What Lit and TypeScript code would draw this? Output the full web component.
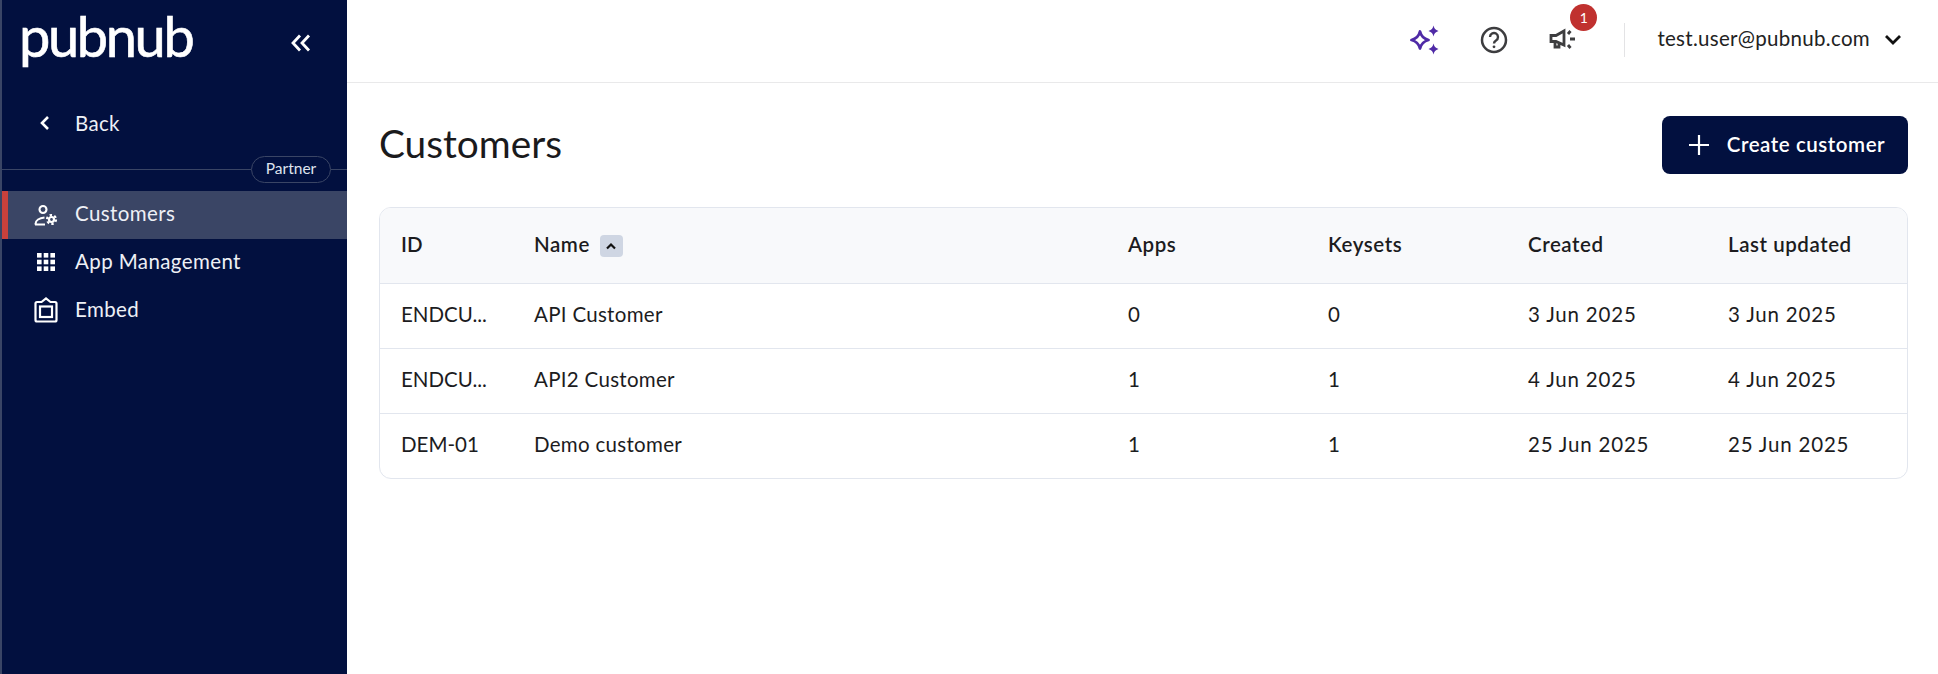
import { LitElement, html, css } from "lit";
import { customElement } from "lit/decorators.js";

const rows = [
  ["ENDCU...", "API Customer", "0", "0", "3 Jun 2025", "3 Jun 2025"],
  ["ENDCU...", "API2 Customer", "1", "1", "4 Jun 2025", "4 Jun 2025"],
  ["DEM-01", "Demo customer", "1", "1", "25 Jun 2025", "25 Jun 2025"],
];

@customElement("app-root")
export class AppRoot extends LitElement {
  static styles = css`
    :host { display: flex; height: 674px; width: 1938px; overflow: hidden; background: #fff; font-family: "Lato", "Liberation Sans", sans-serif; color: #1c1c1e; font-size: 20.5px; letter-spacing: 0.3px; }
    svg { display: block; flex: none; }
    .side { width: 347px; flex: none; background: #02103f; border-left: 2px solid #3a4565; box-sizing: border-box; color: #eef0f6; display: flex; flex-direction: column; }
    .logo-row { height: 82px; display: flex; align-items: center; justify-content: space-between; padding: 0 36px 0 17px; }
    .logo { font-size: 56px; font-weight: 400; color: #fff; letter-spacing: -2.4px; line-height: 82px; margin-top: -10px; -webkit-text-stroke: 0.6px #fff; }
    .collapse { margin-top: 3px; }
    .back { height: 82px; display: flex; align-items: center; gap: 24px; padding: 0 0 0 37px; box-sizing: border-box; }
    .txt { padding-bottom: 1px; }
    .divider { display: flex; align-items: center; margin-bottom: 8px; margin-top: -8px; }
    .line { height: 1px; background: #3a4565; flex: 1; }
    .line.end { flex: none; width: 16px; }
    .pill { border: 1px solid #3a4565; border-radius: 14px; height: 27px; width: 80px; box-sizing: border-box; display: flex; align-items: center; justify-content: center; font-size: 15.5px; letter-spacing: 0; color: #dfe3ee; padding-bottom: 3px; }
    .item { height: 48px; display: flex; align-items: center; border-left: 6px solid transparent; padding-left: 26px; gap: 17px; letter-spacing: 0.4px; }
    .item .txt { padding-bottom: 5px; }
    .item.active { background: #3a4565; border-left-color: #c8413c; }
    .ic { width: 24px; display: flex; justify-content: center; }
    .ic.up { padding-bottom: 3px; }
    main { flex: 1; display: flex; flex-direction: column; min-width: 0; }
    header { height: 83px; box-sizing: border-box; border-bottom: 1px solid #e9e9ea; display: flex; align-items: center; padding: 0 36px 2px 0; justify-content: flex-end; flex: none; }
    .hicon { width: 69px; display: flex; justify-content: center; position: relative; }
    .badge { position: absolute; top: -23px; left: 42px; width: 27px; height: 27px; border-radius: 50%; background: #c0312f; color: #fff; font-size: 14px; letter-spacing: 0; display: flex; align-items: center; justify-content: center; }
    .vsep { width: 1px; height: 34px; background: #e3e3e5; margin: 0 32px 0 27px; }
    .email { color: #222; margin-right: 14px; padding-bottom: 4px; }
    .content { padding: 33px 30px 0 32px; }
    .top { display: flex; justify-content: space-between; align-items: center; height: 58px; margin-bottom: 33px; }
    h1 { font-size: 38.8px; font-weight: 400; letter-spacing: 0; margin: 0; color: #1a1a1c; padding-bottom: 5px; }
    .btn { background: #02103f; color: #fff; width: 246px; height: 58px; border-radius: 8px; display: flex; align-items: center; justify-content: center; gap: 18px; font-weight: 600; letter-spacing: 0.55px; box-sizing: border-box; padding-left: 4px; }
    .btn .txt { padding-bottom: 3px; }
    .table { border: 1px solid #e2e6ee; border-radius: 12px; overflow: hidden; }
    .tr { display: grid; grid-template-columns: 133px 594px 200px 200px 200px 1fr; height: 65px; align-items: center; border-top: 1px solid #e2e6ee; box-sizing: border-box; }
    .tr > div { padding: 0 0 4px 21px; }
    .tr > div:first-child { letter-spacing: 0; }
    .tr:not(.head) > div:nth-child(n + 5) { letter-spacing: 0.8px; }
    .tr.head { height: 75px; background: #f8f9fb; border-top: 0; font-weight: 600; letter-spacing: 0.55px; }
    .tr.head > .name { display: flex; align-items: center; gap: 10px; padding-bottom: 0; }
    .name .txt { padding-bottom: 4px; }
    .sort { width: 23px; height: 22px; border-radius: 4px; background: #cfd6e3; display: flex; align-items: center; justify-content: center; }
  `;

  render() {
    return html`
      <aside class="side">
        <div class="logo-row">
          <span class="logo">pubnub</span>
          <svg class="collapse" width="20" height="18" viewBox="0 0 20 18" fill="none" stroke="#fff" stroke-width="2.800"><path d="M9 1.500 2 9l7 7.500M18 1.500 11 9l7 7.500"/></svg>
        </div>
        <div class="back">
          <svg width="12" height="16" viewBox="0 0 12 16" fill="none" stroke="#fff" stroke-width="2.600"><path d="M9 2 3 8l6 6"/></svg>
          <span class="txt">Back</span>
        </div>
        <div class="divider"><div class="line"></div><div class="pill">Partner</div><div class="line end"></div></div>
        <div class="item active"><span class="ic">
          <svg width="24" height="22" viewBox="0 0 24 22" fill="none" stroke="#fff" stroke-width="2.100"><circle cx="9" cy="5.500" r="3.500"/><path d="M1.500 20.500v-.5c0-3.500 4-6 9-6.500M1 20.500H11"/><circle cx="17.500" cy="15.500" r="2.500" stroke-width="2.200"/><circle cx="17.500" cy="15.500" r="4.500" stroke-width="2.200" stroke-dasharray="2.400 2.300"/></svg>
        </span><span class="txt">Customers</span></div>
        <div class="item"><span class="ic up">
          <svg width="20" height="20" viewBox="0 0 20 20" fill="#fff"><rect x="1" y="1" width="4.600" height="4.600"/><rect x="7.700" y="1" width="4.600" height="4.600"/><rect x="14.400" y="1" width="4.600" height="4.600"/><rect x="1" y="7.700" width="4.600" height="4.600"/><rect x="7.700" y="7.700" width="4.600" height="4.600"/><rect x="14.400" y="7.700" width="4.600" height="4.600"/><rect x="1" y="14.400" width="4.600" height="4.600"/><rect x="7.700" y="14.400" width="4.600" height="4.600"/><rect x="14.400" y="14.400" width="4.600" height="4.600"/></svg>
        </span><span class="txt">App Management</span></div>
        <div class="item"><span class="ic up">
          <svg width="24" height="26" viewBox="0 0 24 26" fill="none" stroke="#fff" stroke-width="2.200"><path d="M7.500 5H3a1.500 1.500 0 0 0-1.500 1.500V23A1.500 1.500 0 0 0 3 24.500h18a1.500 1.500 0 0 0 1.500-1.500V6.500A1.500 1.500 0 0 0 21 5h-4.500L12 1.500Z"/><rect x="6" y="9.500" width="12" height="10.500"/></svg>
        </span><span class="txt">Embed</span></div>
      </aside>
      <main>
        <header>
          <div class="hicon"><svg width="30" height="30" viewBox="0 0 30 30"><path d="M10 6.500C11 11 13 13.500 18.500 15 13 16.500 11 19 10 23.500 9 19 7 16.500 1.500 15 7 13.500 9 11 10 6.500Z" fill="none" stroke="#4f2aa6" stroke-width="2.800" stroke-linejoin="round"/><path fill="#4f2aa6" d="M23.500 .5c.7 3 1.800 4.300 5 5.500-3.200 1.200-4.300 2.500-5 5.500-.7-3-1.800-4.300-5-5.500 3.200-1.200 4.300-2.500 5-5.500ZM23.500 18.500c.7 3 1.800 4.300 5 5.500-3.200 1.200-4.300 2.500-5 5.500-.7-3-1.800-4.300-5-5.500 3.200-1.200 4.300-2.500 5-5.500Z"/></svg></div>
          <div class="hicon"><svg width="28" height="28" viewBox="0 0 28 28" fill="none" stroke="#3d3d3f" stroke-width="2.500"><circle cx="14" cy="14" r="12"/><path d="M10 11a4 4 0 1 1 6 3.500c-1.300.8-2 1.500-2 3" stroke-width="2.400"/><circle cx="14" cy="20.800" r="1.400" fill="#3d3d3f" stroke="none"/></svg></div>
          <div class="hicon"><svg width="28" height="26" viewBox="0 0 28 26" fill="none" stroke="#3d3d3f" stroke-width="2.800"><path d="M2 8.500h5l8-4.500v14l-8-3.500H2ZM6 15v5h4v-4"/><path d="M19 7l2.500-3M21 12h5M19 18l2.500 3"/></svg><span class="badge">1</span></div>
          <div class="vsep"></div>
          <span class="email">test.user@pubnub.com</span>
          <svg width="18" height="12" viewBox="0 0 18 12" fill="none" stroke="#111" stroke-width="2.800"><path d="M2 2l7 7 7-7"/></svg>
        </header>
        <div class="content">
          <div class="top">
            <h1>Customers</h1>
            <div class="btn"><svg width="20" height="20" viewBox="0 0 20 20" stroke="#fff" stroke-width="2.200"><path d="M10 0v20M0 10h20"/></svg><span class="txt">Create customer</span></div>
          </div>
          <div class="table">
            <div class="tr head">
              <div>ID</div>
              <div class="name"><span class="txt">Name</span><span class="sort"><svg width="12" height="8" viewBox="0 0 12 8" fill="none" stroke="#111" stroke-width="2.200"><path d="M2 6.500 6 2.500l4 4"/></svg></span></div>
              <div>Apps</div><div>Keysets</div><div>Created</div><div>Last updated</div>
            </div>
            ${rows.map((r) => html`<div class="tr">${r.map((c) => html`<div>${c}</div>`)}</div>`)}
          </div>
        </div>
      </main>
    `;
  }
}
